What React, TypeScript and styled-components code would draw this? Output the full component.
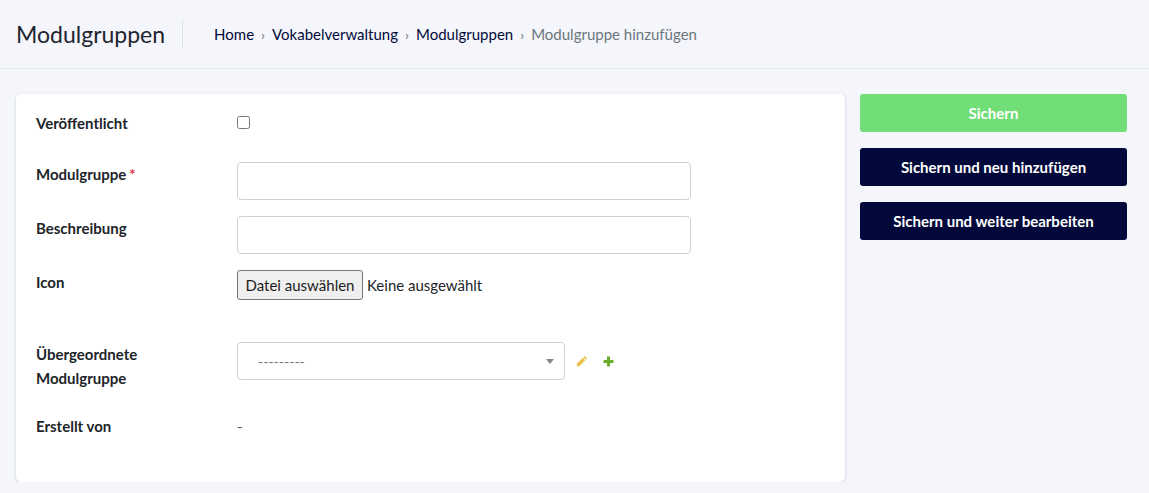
import { createGlobalStyle, styled } from 'styled-components';

const GlobalStyle = createGlobalStyle`
    html, body {
        margin: 0;
        padding: 0;
        background: #f4f6fb;
        font-family: "Lato", "Open Sans", sans-serif;
        font-size: 15px;
        color: #212529;
    }
`;

const Header = styled.header`
    display: flex;
    align-items: center;
    height: 69px;
    padding: 0 16px;
    box-sizing: border-box;
    border-bottom: 1px solid #e3e6ec;
    margin-bottom: 1px;
    border-bottom-width: 1px;
`;

const PageTitle = styled.h1`
    margin: 0;
    padding: 0 17px 0 0;
    height: 29px;
    line-height: 29px;
    font-size: 23px;
    font-weight: 400;
    color: #1e2530;
    border-right: 1px solid #dfe2e8;
    white-space: nowrap;
`;

const Breadcrumb = styled.nav`
    display: flex;
    align-items: center;
    margin-left: 31px;
    font-size: 15px;
`;

const Crumb = styled.span<{ $current?: boolean }>`
    color: ${p => (p.$current ? '#6c757d' : '#02093a')};
`;

const CrumbSep = styled.span`
    margin: 0 7px;
    color: #6c757d;
    font-size: 14px;
`;

const Content = styled.main`
    display: flex;
    align-items: flex-start;
    gap: 15px;
    padding: 24px 22px 0 16px;
`;

const Card = styled.section`
    flex: 0 0 829px;
    height: 388px;
    box-sizing: border-box;
    padding: 17px 20px 0;
    background: #fff;
    border-radius: 5px;
    box-shadow: 0 1px 3px rgba(30, 40, 60, 0.22);
`;

const Row = styled.div<{ $height: number; $gap?: number }>`
    display: grid;
    grid-template-columns: 201px 1fr;
    align-items: start;
    height: ${p => p.$height}px;
    margin-bottom: ${p => p.$gap ?? 16}px;
`;

const Label = styled.label`
    font-weight: 700;
    font-size: 15px;
    line-height: 24px;
    color: #212529;
`;

const Required = styled.span`
    color: #dc3545;
    margin-left: 3px;
`;

const CheckInput = styled.input`
    width: 13px;
    height: 13px;
    margin: 5px 0 0;
`;

const TextInput = styled.input`
    display: block;
    width: 454px;
    height: 38px;
    box-sizing: border-box;
    border: 1px solid #ced0d4;
    border-radius: 4px;
    background: #fff;
`;

const FileField = styled.div`
    display: flex;
    align-items: center;
    gap: 4px;
    font-size: 15px;
`;

const FileButton = styled.button`
    width: 126px;
    height: 30px;
    padding: 0;
    font: inherit;
    color: #1b1b1b;
    background: #efefef;
    border: 1px solid #767676;
    border-radius: 3px;
`;

const FileName = styled.span`
    color: #212529;
`;

const SelectField = styled.div`
    display: flex;
    align-items: center;
`;

const SelectBox = styled.div`
    display: flex;
    align-items: center;
    justify-content: space-between;
    width: 328px;
    height: 38px;
    box-sizing: border-box;
    padding: 0 10px 0 20px;
    border: 1px solid #ced0d4;
    border-radius: 4px;
    background: #fff;
    color: #777;
    font-size: 14px;
`;

const Caret = styled.span`
    width: 0;
    height: 0;
    border-left: 4px solid transparent;
    border-right: 4px solid transparent;
    border-top: 5px solid #888;
`;

const IconLink = styled.a<{ $left: number }>`
    display: inline-flex;
    margin-left: ${p => p.$left}px;
`;

const StaticValue = styled.div`
    font-size: 15px;
    line-height: 24px;
    color: #555;
`;

const Side = styled.aside`
    display: flex;
    flex: 0 0 267px;
    flex-direction: column;
    gap: 16px;
`;

const ActionButton = styled.button<{ $primary?: boolean }>`
    height: 38px;
    padding: 0;
    border: 0;
    border-radius: 3px;
    font-family: inherit;
    font-size: 15px;
    font-weight: 700;
    color: #fff;
    background: ${p => (p.$primary ? '#72de78' : '#02093a')};
`;

const PencilIcon = () => (
    <svg width="12" height="12" viewBox="0 0 12 12">
        <path d="M8.6.9l2.5 2.5-1.2 1.2-2.5-2.5z" fill="#e8b93f" />
        <path d="M6.8 2.7l2.5 2.5-5.7 5.7L.6 11.4l.5-3z" fill="#edc04a" />
    </svg>
);

const PlusIcon = () => (
    <svg width="11" height="11" viewBox="0 0 11 11">
        <path d="M4 .5h3v3.5h3.5v3H7v3.5H4V7H.5V4H4z" fill="#6aad2b" />
    </svg>
);

export default function App() {
    return (
        <>
            <GlobalStyle />
            <Header>
                <PageTitle>Modulgruppen</PageTitle>
                <Breadcrumb>
                    <Crumb>Home</Crumb>
                    <CrumbSep>›</CrumbSep>
                    <Crumb>Vokabelverwaltung</Crumb>
                    <CrumbSep>›</CrumbSep>
                    <Crumb>Modulgruppen</Crumb>
                    <CrumbSep>›</CrumbSep>
                    <Crumb $current>Modulgruppe hinzufügen</Crumb>
                </Breadcrumb>
            </Header>
            <Content>
                <Card>
                    <Row $height={35} $gap={16}>
                        <Label>Veröffentlicht</Label>
                        <div><CheckInput type="checkbox" /></div>
                    </Row>
                    <Row $height={38}>
                        <Label>Modulgruppe<Required>*</Required></Label>
                        <TextInput type="text" />
                    </Row>
                    <Row $height={38}>
                        <Label>Beschreibung</Label>
                        <TextInput type="text" />
                    </Row>
                    <Row $height={30} $gap={42}>
                        <Label>Icon</Label>
                        <FileField>
                            <FileButton type="button">Datei auswählen</FileButton>
                            <FileName>Keine ausgewählt</FileName>
                        </FileField>
                    </Row>
                    <Row $height={48} $gap={24}>
                        <Label>Übergeordnete<br />Modulgruppe</Label>
                        <SelectField>
                            <SelectBox>
                                ---------
                                <Caret />
                            </SelectBox>
                            <IconLink $left={11}><PencilIcon /></IconLink>
                            <IconLink $left={15}><PlusIcon /></IconLink>
                        </SelectField>
                    </Row>
                    <Row $height={24}>
                        <Label>Erstellt von</Label>
                        <StaticValue>-</StaticValue>
                    </Row>
                </Card>
                <Side>
                    <ActionButton $primary type="button">Sichern</ActionButton>
                    <ActionButton type="button">Sichern und neu hinzufügen</ActionButton>
                    <ActionButton type="button">Sichern und weiter bearbeiten</ActionButton>
                </Side>
            </Content>
        </>
    );
}
